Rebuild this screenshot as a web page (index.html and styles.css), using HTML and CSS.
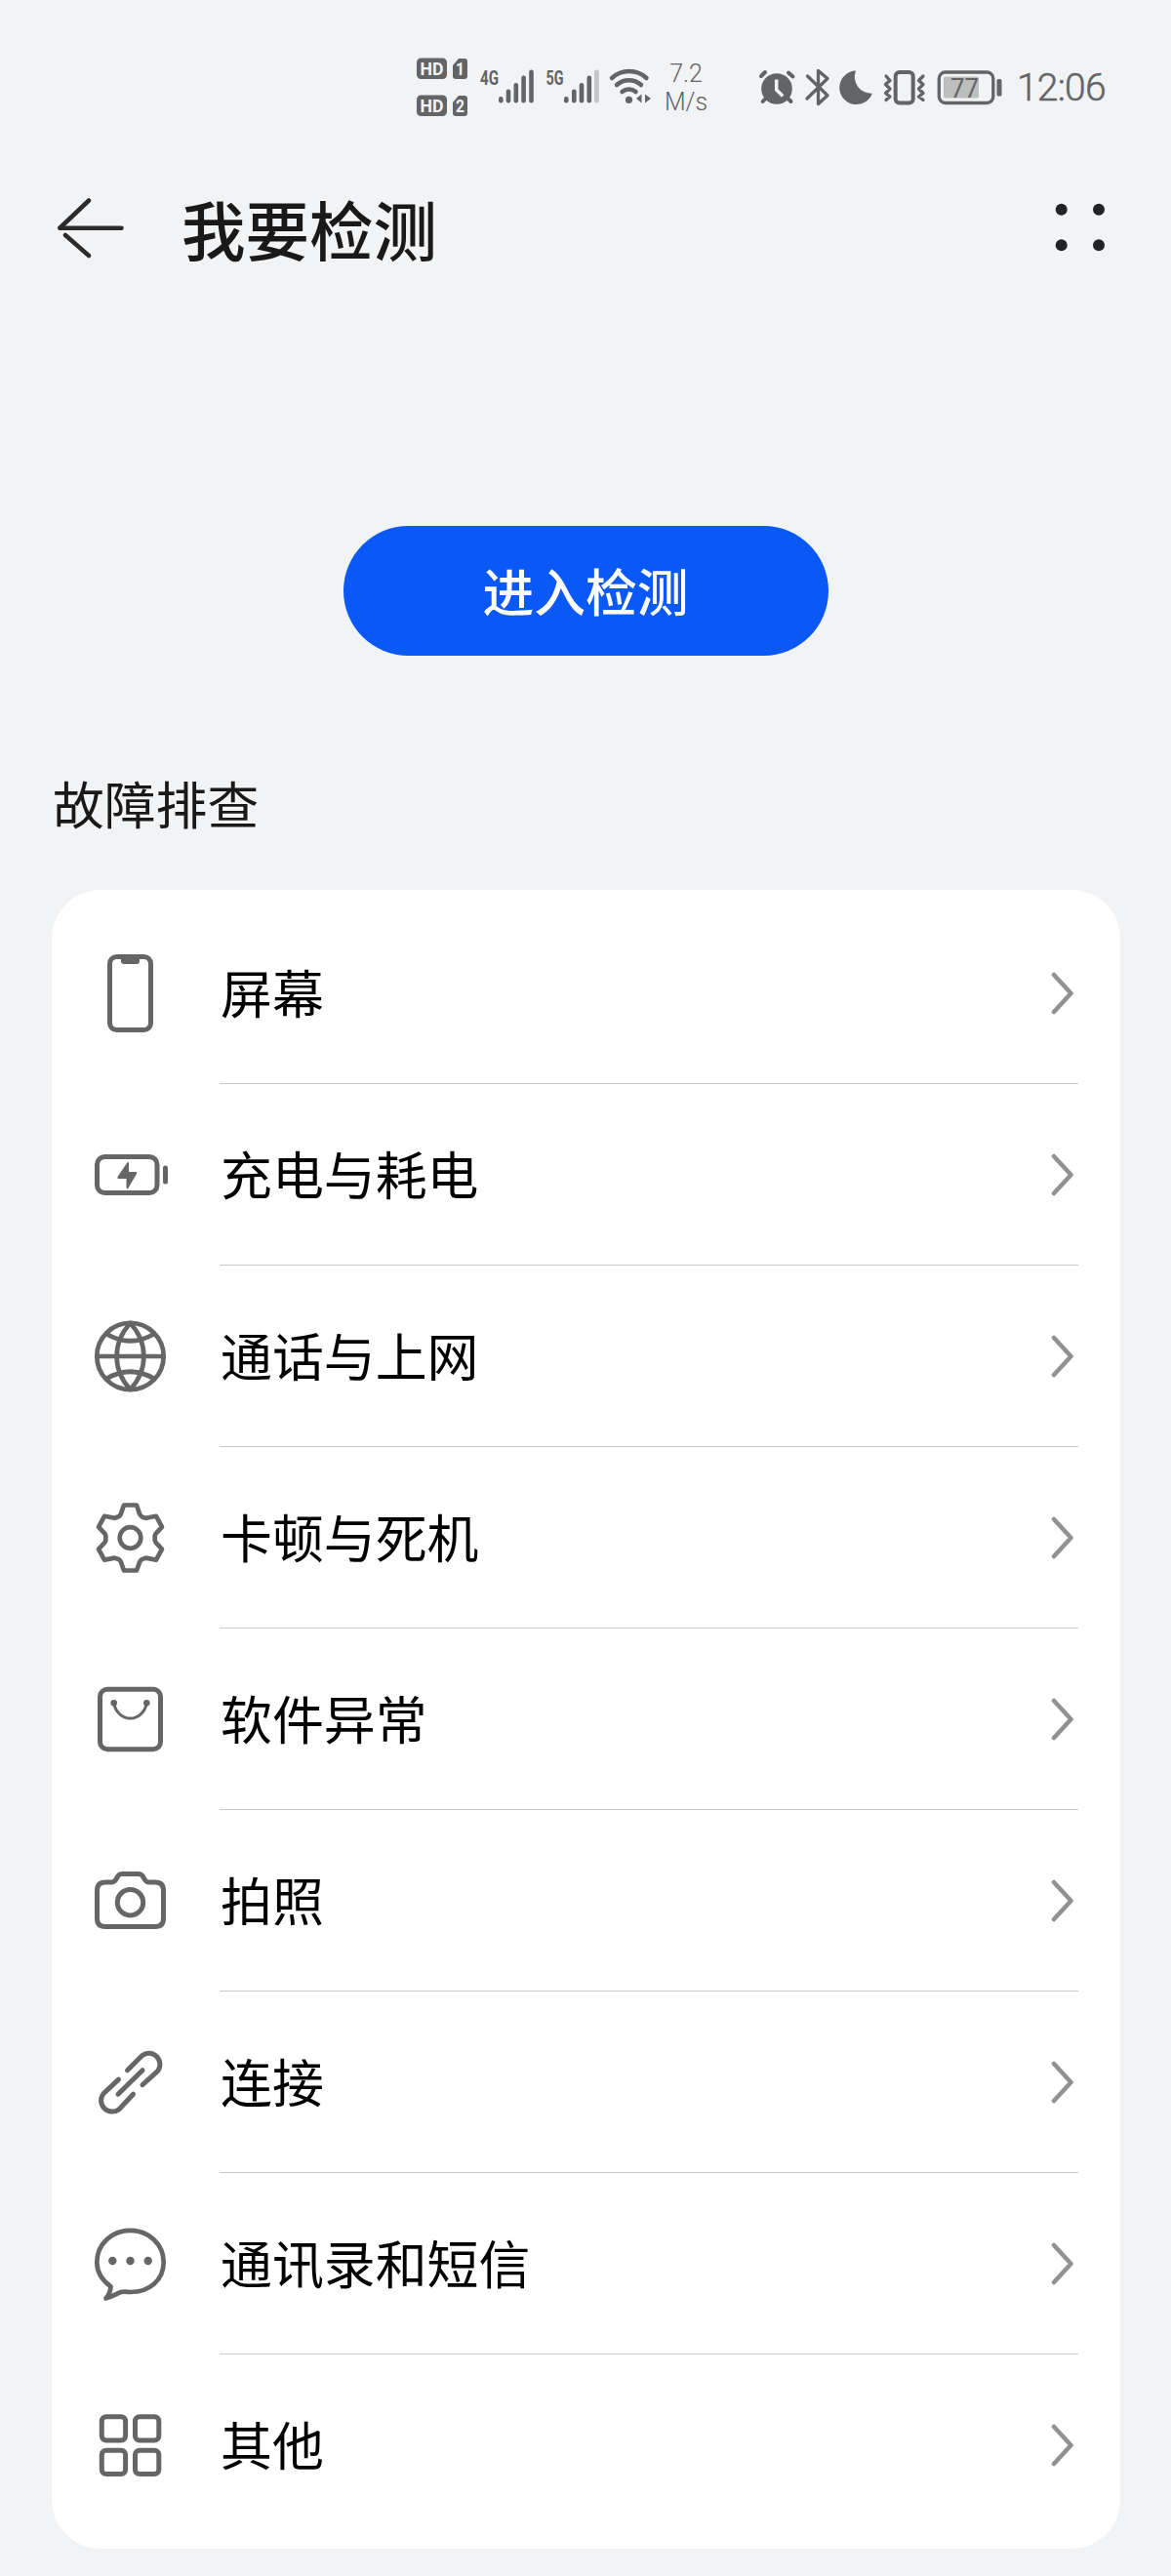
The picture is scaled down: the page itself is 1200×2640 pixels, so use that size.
FILE: index.html
```html
<!DOCTYPE html>
<html lang="zh-CN">
<head>
<meta charset="utf-8">
<title>我要检测</title>
<link rel="stylesheet" href="styles.css">
</head>
<body>
<div class="status-bar">
  <svg class="network" width="246" height="66" viewBox="424 56 246 66">
    <g class="solid">
      <rect x="426" y="59.5" width="31" height="21.500" rx="4.500"/>
      <rect x="426" y="97.500" width="31" height="21.500" rx="4.500"/>
      <path d="M469 60h6q3 0 3 3v15q0 3-3 3h-9q-3 0-3-3v-11z"/>
      <path d="M469 98h6q3 0 3 3v15q0 3-3 3h-9q-3 0-3-3v-11z"/>
      <rect x="510" y="99" width="4.600" height="6.500" rx="2.200"/>
      <rect x="517.700" y="91.500" width="4.600" height="14" rx="2.200"/>
      <rect x="525.500" y="85" width="4.600" height="20.500" rx="2.200"/>
      <rect x="533.300" y="77.500" width="4.600" height="28" rx="2.200"/>
      <rect x="541.200" y="71.500" width="4.600" height="34" rx="2.200"/>
      <rect x="577" y="99" width="4.600" height="6.500" rx="2.200"/>
      <rect x="585" y="91.500" width="4.600" height="14" rx="2.200"/>
      <rect x="592.700" y="85" width="4.600" height="20.500" rx="2.200"/>
      <rect x="600.500" y="77.500" width="4.600" height="28" rx="2.200"/>
      <rect class="faint" x="608" y="71.500" width="4.800" height="34" rx="2.200"/>
      <circle cx="643.500" cy="102.300" r="3.600"/>
      <path d="M656.500 96.500v9l-5.500-4.500zM660 96.500v9l6-4.500z"/>
    </g>
    <g class="line wifi">
      <path d="M626 80a26 26 0 0 1 35.500 0"/>
      <path d="M631 87a18.500 18.500 0 0 1 25 0"/>
      <path d="M636.500 94a11 11 0 0 1 14 0"/>
    </g>
    <text class="badge" x="429.500" y="76.700" textLength="24" lengthAdjust="spacingAndGlyphs">HD</text>
    <text class="badge" x="429.500" y="114.700" textLength="24" lengthAdjust="spacingAndGlyphs">HD</text>
    <text class="badge" x="466" y="77" textLength="9" lengthAdjust="spacingAndGlyphs">1</text>
    <text class="badge" x="466" y="115" textLength="9" lengthAdjust="spacingAndGlyphs">2</text>
    <text class="gen" x="491" y="86.500" textLength="19" lengthAdjust="spacingAndGlyphs">4G</text>
    <text class="gen" x="558.500" y="86.500" textLength="18" lengthAdjust="spacingAndGlyphs">5G</text>
  </svg>
  <div class="speed"><span>7.2</span><span>M/s</span></div>
  <svg class="system" width="252" height="46" viewBox="776 65 252 46">
    <g class="solid">
      <circle cx="796" cy="90" r="15.800"/>
      <path d="M877 71.500a17.300 17.300 0 1 0 16.800 23.200A17 17 0 0 1 877 71.500z"/>
      <rect class="charge" x="967" y="77.500" width="36" height="22" rx="2"/>
      <rect x="1021.500" y="80" width="5" height="17.500" rx="1.500"/>
    </g>
    <path class="hand" d="M795.700 80.500v10.500l6.500 6.500"/>
    <g class="line">
      <path d="M780 77l4-4M808 73.500l4.500 4M784 100.500l-2.300 2.500M808 100.500l2.500 2.500"/>
      <path class="thin" d="M827.500 77l20.500 19.800-9.500 8.700v-34l9.500 8-21 20.500"/>
      <rect x="917.700" y="73" width="18" height="31.500" rx="4"/>
      <path class="thin" d="M908 77l4 4.500-4.500 4 4.500 4.500-4.500 4.500 4.500 3.500-4 3.500M946 77l-4.500 4.500 4.500 4-4.500 4.500 4.500 4.500-4.500 3.500 4.500 3.500"/>
      <rect class="thin" x="962.300" y="73" width="55.500" height="31.500" rx="6.500"/>
    </g>
    <text class="charge-text" x="974" y="98.700" textLength="29" lengthAdjust="spacingAndGlyphs">77</text>
  </svg>
  <time class="clock">12:06</time>
</div>

<header class="title-bar">
  <svg class="back" width="72" height="64" viewBox="58 201 72 64"><path d="M91 205.500L61.500 233.500M67 241L91 262"/><path d="M61.500 233.700H124.500"/></svg>
  <h1>我要检测</h1>
  <svg class="more" width="52" height="52" viewBox="1081 206 52 52"><circle cx="1087.700" cy="213.700" r="6"/><circle cx="1126" cy="213.700" r="6"/><circle cx="1087.700" cy="250.300" r="6"/><circle cx="1126" cy="250.300" r="6"/></svg>
</header>

<main>
  <button class="start" type="button">进入检测</button>
  <h2>故障排查</h2>
  <ul class="card">
    <li>
      <svg class="icon" viewBox="0 0 80 80"><rect x="19.500" y="2.500" width="42" height="75" rx="7"/><path class="fill" d="M31 3h19v4q0 3-3 3h-13q-3 0-3-3z"/></svg>
      <div class="row"><span>屏幕</span><svg class="chevron" viewBox="0 0 24 44"><path d="M3 3L20.500 22L3 41"/></svg></div>
    </li>
    <li>
      <svg class="icon" viewBox="0 0 80 80"><rect x="6.500" y="21.500" width="61.500" height="37" rx="8"/><path d="M76.500 33v14"/><path class="fill" d="M37 30.500q2-2 2 .5v8.500h7q2 0 1 2l-8.500 14.500q-1.500 2-2-.5v-9h-8q-2-.5-.7-2.500z" transform="translate(0 -2.500)"/></svg>
      <div class="row"><span>充电与耗电</span><svg class="chevron" viewBox="0 0 24 44"><path d="M3 3L20.500 22L3 41"/></svg></div>
    </li>
    <li>
      <svg class="icon globe" viewBox="0 0 80 80"><circle cx="40.500" cy="40" r="34.200"/><path d="M6.500 40h68M40.500 6C22 26 22 54 40.500 74C59 54 59 26 40.500 6M16 17Q40.500 31.500 65 17M16 63Q40.500 48.500 65 63"/></svg>
      <div class="row"><span>通话与上网</span><svg class="chevron" viewBox="0 0 24 44"><path d="M3 3L20.500 22L3 41"/></svg></div>
    </li>
    <li>
      <svg class="icon gear" viewBox="0 0 80 80"><circle cx="40.500" cy="40" r="10.800"/><path d="M34 6.500h13l3 9q1 2.500 3.500 3.500l3 .8 10.500-2 6 11-6.500 7-.8 2v5l1 2 6.300 6.800-6 11-10.500-2-4 1.500q-1.800.8-2.500 3l-3 8.400h-13l-3-8.500q-.8-2.200-2.500-3l-4-1.400-10.500 2-6-11 6.500-7 .8-2v-5l-1-2-6.300-6.800 6-11 10.500 2 4-1.500q1.800-.8 2.500-3z"/></svg>
      <div class="row"><span>卡顿与死机</span><svg class="chevron" viewBox="0 0 24 44"><path d="M3 3L20.500 22L3 41"/></svg></div>
    </li>
    <li>
      <svg class="icon" viewBox="0 0 80 80"><rect x="9.500" y="9.200" width="62" height="61.500" rx="7.500"/><path class="strap" d="M23.700 23a17 19 0 0 0 33.600 0"/><circle class="fill" cx="23.700" cy="23.200" r="3.300"/><circle class="fill" cx="57.300" cy="23.200" r="3.300"/></svg>
      <div class="row"><span>软件异常</span><svg class="chevron" viewBox="0 0 24 44"><path d="M3 3L20.500 22L3 41"/></svg></div>
    </li>
    <li>
      <svg class="icon" viewBox="0 0 80 80"><g transform="translate(0 2)"><path d="M15 19h6q3 0 4.500-2.500l2.500-4Q29.500 10.500 32 10.500h17q2.500 0 4 2l2.500 4Q57 19 60 19h6q8.500 0 8.500 8.500v28.500q0 8.500-8.500 8.500h-51q-8.500 0-8.500-8.500v-28.500q0-8.500 8.500-8.500z"/><circle cx="40.500" cy="39.700" r="13.200"/></g></svg>
      <div class="row"><span>拍照</span><svg class="chevron" viewBox="0 0 24 44"><path d="M3 3L20.500 22L3 41"/></svg></div>
    </li>
    <li>
      <svg class="icon" viewBox="0 0 80 80"><path d="M37.500 28.500L52.500 13.500A11.400 11.400 0 0 1 68.500 29.500L53 43.500M53 28.500L28 53M28.500 38L13 52.500A11.400 11.400 0 0 0 29 68.500L43.500 53" transform="translate(0 -.8)"/></svg>
      <div class="row"><span>连接</span><svg class="chevron" viewBox="0 0 24 44"><path d="M3 3L20.500 22L3 41"/></svg></div>
    </li>
    <li>
      <svg class="icon bubble" viewBox="0 0 80 80"><path d="M20.500 63.500C10.500 56 6.300 48 6.300 38.500C6.300 20 21.500 5.800 40.500 5.800S74.700 20 74.700 38.500S59.500 69 41 69C38 69 34.500 68 31 69C26 70.500 22.500 74 15.500 75.500Q20 70.500 20.500 63.500z"/><circle class="fill" cx="22.300" cy="37" r="4.200"/><circle class="fill" cx="40.500" cy="37" r="4.200"/><circle class="fill" cx="58.700" cy="37" r="4.200"/></svg>
      <div class="row"><span>通讯录和短信</span><svg class="chevron" viewBox="0 0 24 44"><path d="M3 3L20.500 22L3 41"/></svg></div>
    </li>
    <li>
      <svg class="icon" viewBox="0 0 80 80"><rect x="11.300" y="10.700" width="24.300" height="24.300" rx="4.500"/><rect x="45.500" y="10.700" width="24.300" height="24.300" rx="4.500"/><rect x="11.300" y="45.300" width="24.300" height="24.300" rx="4.500"/><rect x="45.500" y="45.300" width="24.300" height="24.300" rx="4.500"/></svg>
      <div class="row"><span>其他</span><svg class="chevron" viewBox="0 0 24 44"><path d="M3 3L20.500 22L3 41"/></svg></div>
    </li>
  </ul>
</main>
</body>
</html>
```
FILE: styles.css
```css
* {
  box-sizing: border-box;
}

body {
  margin: 0;
  height: 2640px;
  background: #f2f3f4;
  font-family: "Noto Sans CJK SC", sans-serif;
  color: #191919;
}

svg {
  display: block;
  flex: none;
}

.status-bar {
  display: flex;
  align-items: center;
  justify-content: flex-end;
  height: 178px;
  padding-right: 66px;
  color: #636466;
}

.solid,
.status-bar text {
  fill: #636466;
}

.solid .faint {
  fill: #c4c5c6;
}

.solid .charge {
  fill: #bdbebe;
}

.line {
  fill: none;
  stroke: #636466;
  stroke-width: 4;
  stroke-linecap: round;
  stroke-linejoin: round;
}

.line .thin {
  stroke-width: 3.3;
}

.wifi {
  stroke-width: 4.5;
}

.hand {
  fill: none;
  stroke: #f2f3f4;
  stroke-width: 3.5;
}

.status-bar .badge {
  fill: #f2f3f4;
  font: 700 19px Roboto, sans-serif;
}

.gen {
  font: 700 21px Roboto, sans-serif;
}

.charge-text {
  font: 400 28px Roboto, sans-serif;
}

.speed {
  display: flex;
  flex-direction: column;
  align-items: center;
  width: 60px;
  margin: 2px 43px 0 2px;
  font: 300 25px/29px Roboto, sans-serif;
}

.clock {
  width: 92px;
  margin: 2px 0 0 14px;
  font: 300 39px/46px Roboto, sans-serif;
  letter-spacing: -0.8px;
  white-space: nowrap;
  -webkit-text-stroke: 0.5px #636466;
}

.title-bar {
  display: flex;
  align-items: center;
  height: 110px;
  padding: 0 67px 0 58px;
}

.back {
  fill: none;
  stroke: #2b2b2c;
  stroke-width: 4.5;
  stroke-linecap: round;
}

.title-bar h1 {
  flex: 1;
  margin: 1px 0 0 56px;
  font-size: 65.5px;
  font-weight: 500;
  line-height: 80px;
}

.more {
  fill: #222324;
}

main {
  display: flex;
  flex-direction: column;
  padding: 251px 52px 0 53px;
}

.start {
  align-self: center;
  width: 497px;
  height: 133px;
  margin: 0;
  padding: 0 1px 3px 0;
  border: 0;
  border-radius: 67px;
  background: #0a59f7;
  color: #fff;
  font: 500 52.800px/76px "Noto Sans CJK SC", sans-serif;
}

main h2 {
  margin: 110px 0 50px 1px;
  font-size: 52.800px;
  font-weight: 400;
  line-height: 80px;
}

.card {
  margin: 0;
  padding: 13px 43px 13px 40px;
  border-radius: 50px;
  background: #fff;
  color: #000;
  list-style: none;
}

.card li {
  display: flex;
  align-items: center;
  gap: 52px;
  height: 186px;
}

.icon {
  width: 80px;
  height: 80px;
  fill: none;
  stroke: #666;
  stroke-width: 5;
  stroke-linecap: round;
  stroke-linejoin: round;
}

.icon .fill {
  fill: #666;
  stroke: none;
}

.globe,
.gear,
.bubble {
  stroke-width: 4.700;
}

.icon .strap {
  stroke-width: 3;
}

.row {
  display: flex;
  flex: 1;
  align-items: center;
  justify-content: space-between;
  height: 186px;
  padding-right: 4px;
  border-bottom: 1px solid #c9c9c9;
  font-size: 52.900px;
  line-height: 78px;
}

.row span {
  padding: 0 0 3px 1px;
}

.card li:last-child .row {
  border-bottom-color: transparent;
}

.chevron {
  width: 24px;
  height: 44px;
  fill: none;
  stroke: #919191;
  stroke-width: 4.500;
  stroke-linecap: round;
  stroke-linejoin: round;
}
```
